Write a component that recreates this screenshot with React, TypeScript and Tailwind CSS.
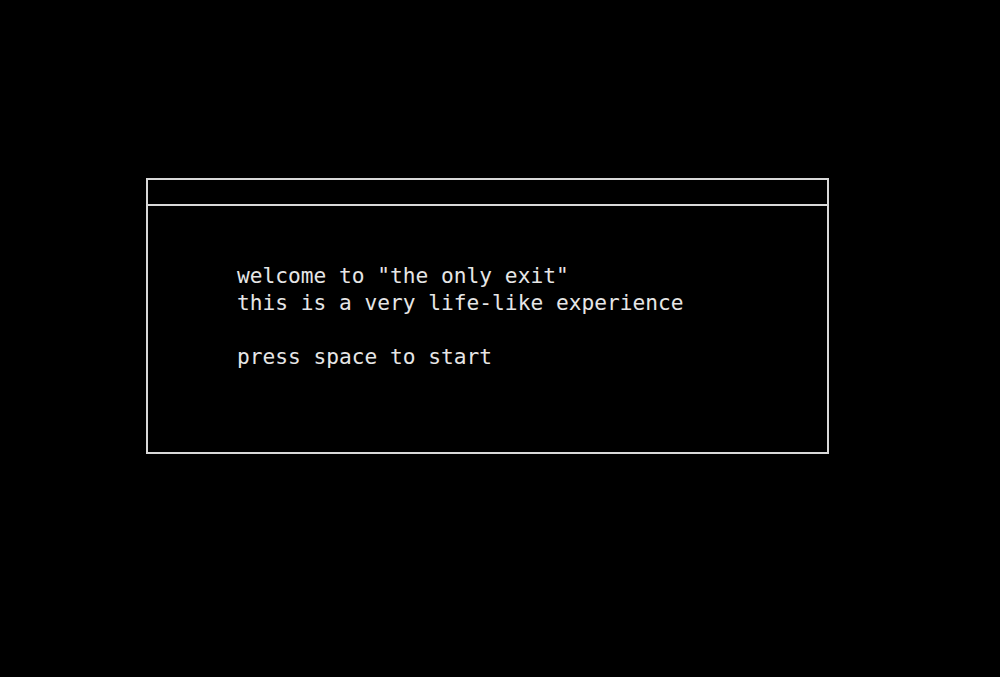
export default function App() {
  return (
    <div className="flex h-[677px] w-full items-start justify-start bg-black">
      <div className="ml-[146px] mt-[178px] flex h-[276px] w-[683px] flex-col border-2 border-[#d9d9d9]">
        <div className="h-[26px] border-b-2 border-[#d9d9d9]" />
        <div
          className="pl-[89px] pt-[56px] text-[21.2px] leading-[27px] text-[#e6e6e6]"
          style={{ fontFamily: '"DejaVu Sans Mono", "Liberation Mono", monospace' }}
        >
          <p>welcome to "the only exit"</p>
          <p>this is a very life-like experience</p>
          <p>&nbsp;</p>
          <p>press space to start</p>
        </div>
      </div>
    </div>
  );
}
